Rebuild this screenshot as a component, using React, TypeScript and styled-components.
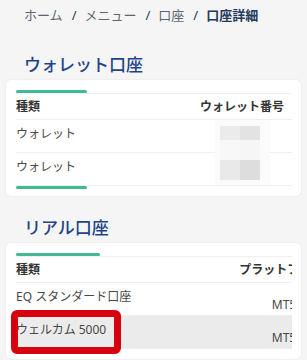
import React from "react";
import styled, { createGlobalStyle } from "styled-components";

const GlobalStyle = createGlobalStyle`
  html, body {
    margin: 0;
    padding: 0;
    background: #f5f5f5;
  }
  body {
    font-family: "Noto Sans", "Noto Sans CJK JP", sans-serif;
    -webkit-font-smoothing: antialiased;
  }
`;

const Page = styled.div`
  width: 307px;
  height: 360px;
  overflow: hidden;
  background: #f5f5f5;
`;

const Breadcrumb = styled.nav`
  display: flex;
  align-items: center;
  padding: 7px 24px 0;
  font-size: 13px;
  line-height: 16px;
  color: #5d6572;
`;

const Crumb = styled.span<{ $current?: boolean }>`
  font-weight: ${(p) => (p.$current ? 700 : 400)};
  color: ${(p) => (p.$current ? "#233a5e" : "#5d6572")};
`;

const Sep = styled.span`
  margin: 0 8px 0 9px;
  color: #233a5e;
`;

const Section = styled.section<{ $gap: number }>`
  margin-top: ${(p) => p.$gap}px;
`;

const Title = styled.h2`
  margin: 0 0 5px;
  padding: 0 24px;
  font-size: 17px;
  line-height: 20px;
  font-weight: 500;
  color: #1e4589;
`;

const Card = styled.div`
  position: relative;
  margin: 0 6px;
  background: #fff;
  border-radius: 5px;
  box-shadow: 0 0 2px rgba(0, 0, 0, 0.09);
  padding: 10px 9px 7px 10px;
`;

const ScrollBar = styled.div<{ $w: number }>`
  width: ${(p) => p.$w}px;
  height: 3px;
  border-radius: 2px;
  background: #43b897;
`;

const TableWrap = styled.div`
  overflow: hidden;
`;

const Table = styled.table<{ $width?: number }>`
  border-collapse: collapse;
  table-layout: fixed;
  width: ${(p) => (p.$width ? `${p.$width}px` : "100%")};
  border-top: 1px solid #efefef;
`;

const Th = styled.th<{ $align?: string; $w?: number }>`
  box-sizing: border-box;
  text-align: ${(p) => p.$align || "left"};
  width: ${(p) => (p.$w ? `${p.$w}px` : "auto")};
  font-size: 12px;
  font-weight: 700;
  color: #333;
  padding: 5px 8px 4px ${(p) => (p.$align === "center" ? "8px" : "0")};
  line-height: 16px;
  border-bottom: 1px solid #efefef;
  white-space: nowrap;
  overflow: hidden;
`;

const Row = styled.tr<{ $active?: boolean }>`
  background: ${(p) => (p.$active ? "#ebebeb" : "transparent")};
`;

const Td = styled.td<{ $align?: string; $low?: boolean }>`
  box-sizing: border-box;
  text-align: ${(p) => p.$align || "left"};
  font-size: 12px;
  color: #474747;
  padding: ${(p) => (p.$low ? "14px 14px 2px 8px" : "6px 8px 10px 0")};
  line-height: 16px;
  border-bottom: 1px solid #efefef;
  vertical-align: top;
  white-space: nowrap;
`;

const Mosaic = styled.div`
  position: absolute;
  left: 209px;
  top: 40px;
  padding: 6px 10px 5px 5px;
  background: #fbfbfb;
  display: grid;
  grid-template-columns: 20px 20px;
  grid-template-rows: 14px 20px 20px;
`;

const Tile = styled.div<{ $c: string }>`
  background: ${(p) => p.$c};
`;

const Highlight = styled.div`
  position: absolute;
  left: 5px;
  top: 67px;
  width: 110px;
  height: 44px;
  box-sizing: border-box;
  border: 7px solid #d6000f;
  border-radius: 6px;
`;

const tiles = ["#ebebeb", "#e3e3e3", "#f8f8f8", "#f6f6f6", "#e9e9e9", "#dddddd"];

export default function App() {
  return (
    <Page>
      <GlobalStyle />
      <Breadcrumb>
        <Crumb>ホーム</Crumb>
        <Sep>/</Sep>
        <Crumb>メニュー</Crumb>
        <Sep>/</Sep>
        <Crumb>口座</Crumb>
        <Sep>/</Sep>
        <Crumb $current>口座詳細</Crumb>
      </Breadcrumb>

      <Section $gap={32}>
        <Title>ウォレット口座</Title>
        <Card>
          <ScrollBar $w={71} />
          <TableWrap>
            <Table>
              <thead>
                <tr>
                  <Th>種類</Th>
                  <Th $align="right">ウォレット番号</Th>
                </tr>
              </thead>
              <tbody>
                <Row>
                  <Td>ウォレット</Td>
                  <Td $align="right"></Td>
                </Row>
                <Row>
                  <Td>ウォレット</Td>
                  <Td $align="right"></Td>
                </Row>
              </tbody>
            </Table>
          </TableWrap>
          <ScrollBar $w={71} />
          <Mosaic>
            {tiles.map((c, i) => (
              <Tile key={i} $c={c} />
            ))}
          </Mosaic>
        </Card>
      </Section>

      <Section $gap={22}>
        <Title>リアル口座</Title>
        <Card>
          <ScrollBar $w={84} />
          <TableWrap>
            <Table $width={327}>
              <thead>
                <tr>
                  <Th $w={215}>種類</Th>
                  <Th $align="center" $w={112}>
                    プラットフォーム
                  </Th>
                </tr>
              </thead>
              <tbody>
                <Row>
                  <Td>EQ スタンダード口座</Td>
                  <Td $align="center" $low>
                    MT5
                  </Td>
                </Row>
                <Row $active>
                  <Td>ウェルカム 5000</Td>
                  <Td $align="center" $low>
                    MT5
                  </Td>
                </Row>
              </tbody>
            </Table>
          </TableWrap>
          <ScrollBar $w={84} />
          <Highlight />
        </Card>
      </Section>
    </Page>
  );
}
